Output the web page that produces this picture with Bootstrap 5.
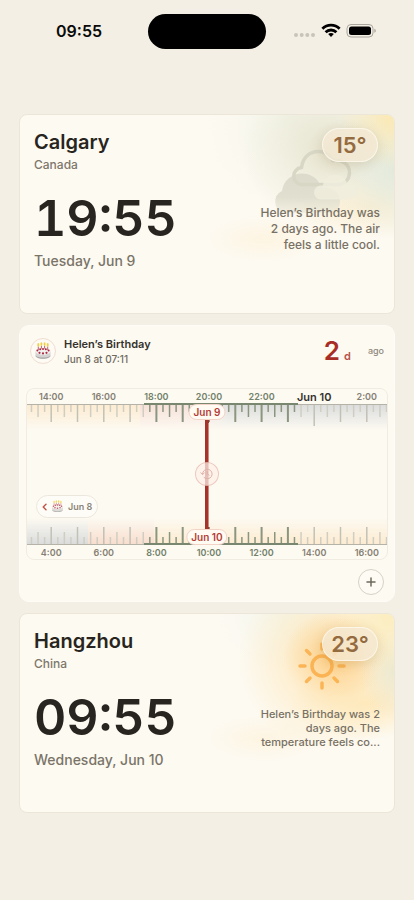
<!DOCTYPE html>
<html lang="en">
<head>
<meta charset="utf-8">
<meta name="viewport" content="width=device-width, initial-scale=1">
<title>World clock</title>
<link href="https://cdn.jsdelivr.net/npm/bootstrap@5.3.0/dist/css/bootstrap.min.css" rel="stylesheet">
<style>
body{background:#f4efe4;font-family:Inter,"Liberation Sans",sans-serif;color:#282520;min-height:100vh}
.status-bar{height:62px;color:#0a0a0a}
.status-time{font-size:16px;font-weight:600;line-height:20px;margin-left:10px}
.status-icons{margin-right:12px}
.island{width:118px;height:35px;background:#000}
.stack{padding:52px 19px 24px 19px;gap:11px}
.panel{background:#fdfaf2;border:1px solid #ebe6d8;border-radius:8px;overflow:hidden}
.city-panel{padding:13px 14px 0 14px;height:200px}
.timeline-panel{border-radius:10px;border-color:#fefcf7}
.city{font-size:20px;font-weight:600;line-height:28px}
.country{font-size:12px;font-weight:500;line-height:18px;color:#7d776b}
.clock{font-size:50px;font-weight:600;line-height:60px;margin-top:14px;font-variant-numeric:tabular-nums}
.date{font-size:14px;font-weight:500;line-height:26px;color:#7a7468}
.temp{width:56px;height:34px;margin-right:2px;font-size:22px;font-weight:600;color:#946b40;background:rgba(244,233,211,.8);border:1px solid rgba(255,252,243,.7);box-shadow:0 3px 12px rgba(120,100,50,.18)}
.note{width:132px;height:50px;margin-top:42px;font-weight:500;color:#787165}
.note-lg{font-size:12px;line-height:16px}
.note-sm{font-size:11px;line-height:14px}
.sky{top:0;right:0;width:190px;height:100%}
.sky-cloudy{background:
 radial-gradient(circle 54px at 190px 0,rgba(253,231,170,.9),rgba(253,231,170,.4) 50%,transparent),
 radial-gradient(ellipse 60px 70px at 190px 56px,rgba(223,232,218,.85),rgba(226,233,219,.4) 55%,transparent),
 radial-gradient(ellipse 80px 32px at 166px 92px,rgba(254,236,200,.7),rgba(254,236,200,.35) 50%,transparent),
 radial-gradient(ellipse 60px 24px at 60px 124px,rgba(254,240,212,.55),transparent),
 radial-gradient(ellipse 92px 78px at 130px 36px,rgba(226,222,198,.85),rgba(234,231,211,.5) 50%,transparent),
 radial-gradient(ellipse 96px 86px at 96px 12px,rgba(234,238,224,.7),rgba(240,242,230,.35) 55%,transparent)}
.sky-sunny{background:
 radial-gradient(circle 60px at 188px 0,rgba(252,236,184,.9),rgba(252,236,184,.4) 50%,transparent),
 radial-gradient(ellipse 34px 50px at 190px 56px,rgba(232,231,206,.85),rgba(234,231,206,.4) 50%,transparent),
 radial-gradient(ellipse 56px 44px at 135px 40px,rgba(255,190,94,.5),rgba(255,190,94,.2) 50%,transparent),
 radial-gradient(circle 92px at 126px 46px,rgba(255,208,132,.7),rgba(254,226,170,.4) 52%,transparent),
 radial-gradient(ellipse 80px 36px at 164px 90px,rgba(255,230,176,.7),rgba(255,230,176,.35) 50%,transparent),
 radial-gradient(ellipse 60px 24px at 60px 124px,rgba(254,240,212,.55),transparent),
 radial-gradient(ellipse 70px 60px at 80px 0,rgba(236,242,232,.5),transparent)}
.event-head{height:50px;padding:0 10px;margin-bottom:12px}
.event-icon{width:26px;height:26px;border:1px solid #f1ddd3;background:#fefbf4}
.event-title{font-size:11px;font-weight:600;line-height:15px;color:#35322d}
.event-date{font-size:10px;font-weight:500;line-height:14px;color:#6f6a5f}
.count{font-size:26px;font-weight:600;line-height:30px;color:#a82d27}
.count-unit{font-size:11px;font-weight:600;color:#b9534a}
.ago{font-size:9px;font-weight:500;color:#8f897c;margin-left:17px}
.ruler-frame{height:172px;margin:0 6px;border:1px solid #f0ece1;border-radius:8px;overflow:hidden}
.ruler text{font:600 9px Inter,"Liberation Sans",sans-serif;text-anchor:middle;fill:#858073}
.ruler .in-range{fill:#72816a}
.ruler .day{font-size:11px;fill:#35322d}
.pin{left:50%;transform:translateX(-50%);height:16px;padding:0 4px;font-size:10px;font-weight:600;line-height:14px;color:#b23c35;background:#fffaf2;border:1px solid #f3d3c8;white-space:nowrap}
.pin-top{top:15px}
.pin-bottom{bottom:14px}
.now-btn{left:50%;top:50%;transform:translate(-50%,-50%);width:24px;height:24px;border:1px solid rgba(205,120,108,.35);background:rgba(252,240,232,.75)}
.chip{left:9px;bottom:41px;height:23px;padding:0 5px;gap:4px;font-size:9px;font-weight:600;color:#8b8578;background:#fefcf6;border:1px solid #ece7dc}
.event-foot{height:41px;padding:2px 10px 0 0}
.add-btn{width:26px;height:26px;border:1px solid #d5d1c6;background:#fdfbf4}
</style>
</head>
<body>
<svg width="0" height="0" class="position-absolute" aria-hidden="true">
  <symbol id="cake" viewBox="0 0 18 18">
    <path d="M1.500 9.500v4.200c0 1.700 3.300 3 7.500 3s7.500-1.300 7.500-3V9.500z" fill="#d4d3d1"/>
    <path d="M1.500 13.500c0 1.900 3.300 3.200 7.500 3.200s7.500-1.300 7.500-3.200c-1.500 1.400-4 2-7.500 2s-6-.6-7.500-2z" fill="#a9a8a6"/>
    <ellipse cx="9" cy="9.300" rx="7.500" ry="3.600" fill="#f3f1ef"/>
    <g stroke="#c4606b" stroke-width="1"><path d="M4.300 4.500v3.500M7.400 3.700v3M10.600 3.700v3M13.700 4.500v3.500"/></g>
    <g fill="#f1cf45"><ellipse cx="4.300" cy="2.900" rx="1" ry="1.800"/><ellipse cx="7.400" cy="2.100" rx="1" ry="1.800"/><ellipse cx="10.600" cy="2.100" rx="1" ry="1.800"/><ellipse cx="13.700" cy="2.900" rx="1" ry="1.800"/></g>
    <g fill="#ab2941"><circle cx="3.400" cy="8.600" r="1"/><circle cx="6.200" cy="7.300" r="1"/><circle cx="9" cy="7" r="1"/><circle cx="11.800" cy="7.300" r="1"/><circle cx="14.600" cy="8.600" r="1"/><circle cx="5.500" cy="10.800" r="1.100"/><circle cx="9" cy="11.400" r="1.100"/><circle cx="12.500" cy="10.800" r="1.100"/></g>
  </symbol>
</svg>

<header class="status-bar row g-0 align-items-center">
  <div class="col text-center"><span class="status-time">09:55</span></div>
  <div class="col-auto"><div class="island rounded-pill"></div></div>
  <div class="col d-flex justify-content-center align-items-center">
    <svg class="status-icons" width="84" height="18" viewBox="0 0 84 18" aria-label="Wi-Fi on, battery full" role="img">
      <g fill="#c8c4ba"><circle cx="4" cy="13" r="2"/><circle cx="9.700" cy="13" r="2"/><circle cx="15.300" cy="13" r="2"/><circle cx="21" cy="13" r="2"/></g>
      <g fill="none" stroke="#000" stroke-width="2.800"><path d="M30.400 6.800a12 12 0 0 1 17.200 0"/><path d="M33.600 10.300a7.500 7.500 0 0 1 10.800 0"/></g>
      <path d="M39 15l-2.800-2.900a3.900 3.900 0 0 1 5.600 0z" fill="#000"/>
      <rect x="55" y="2.500" width="26" height="12.500" rx="4" fill="none" stroke="#aaa69d"/>
      <rect x="57" y="4.500" width="22" height="8.500" rx="2.500" fill="#000"/>
      <path d="M82.500 6.800c1.500.5 1.500 3.500 0 4z" fill="#8f8c85"/>
    </svg>
  </div>
</header>

<main class="stack d-flex flex-column">
  <section class="panel city-panel position-relative d-flex justify-content-between">
    <div class="sky sky-cloudy position-absolute" aria-hidden="true">
      <svg width="190" height="130" viewBox="0 0 190 130">
        <defs><linearGradient id="fade" x1="0" y1="0" x2="0" y2="1"><stop offset="0" stop-color="#dcdbcb"/><stop offset=".6" stop-color="#e1dfd0"/><stop offset="1" stop-color="#e9e6d4" stop-opacity=".5"/></linearGradient></defs>
        <path d="M79 98a12 12 0 0 1-1-22C79 66 88 58.500 98 58.500c8 0 15 4 18 11 1 1 2 2 3 3 9-1 17 5 17 13 0 6-2 10-6 12.500z" fill="url(#fade)"/>
        <path d="M99 69.500a8.500 8.500 0 0 1-1.500-17C99 42 106 36.500 114 36.500c7 0 12 3.500 15 9 9-1.500 16.500 4 16.500 12 0 7-5 12-12 12z" fill="none" stroke="#d8d7c6" stroke-width="3.500"/>
        <path d="M117 84.500a7 7 0 0 1 0-14h2c1-7 6-11 12-11s11 4 12 9c6-1 10 3 10 8s-4 8-9 8z" fill="#f0eddd" opacity=".85"/>
      </svg>
    </div>
    <div class="position-relative">
      <h2 class="city mb-0">Calgary</h2>
      <div class="country">Canada</div>
      <div class="clock">19:55</div>
      <div class="date">Tuesday, Jun 9</div>
    </div>
    <div class="position-relative d-flex flex-column align-items-end">
      <div class="temp rounded-pill d-flex align-items-center justify-content-center">15°</div>
      <div class="note note-lg d-flex align-items-center justify-content-end text-end"><span>Helen’s Birthday was<br>2 days ago. The air<br>feels a little cool.</span></div>
    </div>
  </section>

  <section class="panel timeline-panel">
    <div class="event-head d-flex align-items-center">
      <span class="event-icon rounded-circle d-flex align-items-center justify-content-center flex-shrink-0"><svg width="18" height="18" aria-hidden="true"><use href="#cake"/></svg></span>
      <div class="flex-grow-1 ps-2 me-2">
        <div class="event-title">Helen’s Birthday</div>
        <div class="event-date">Jun 8 at 07:11</div>
      </div>
      <div class="d-flex align-items-baseline gap-1"><span class="count">2</span><span class="count-unit">d</span></div>
      <span class="ago">ago</span>
    </div>
    <div class="ruler-frame position-relative">
      <svg class="ruler d-block" width="100%" height="170" role="img" aria-label="Calgary and Hangzhou hours side by side">
        <defs>
          <linearGradient id="down" x1="0" y1="0" x2="0" y2="1"><stop offset="0" stop-color="#fff"/><stop offset="1" stop-color="#000"/></linearGradient>
          <linearGradient id="up" x1="0" y1="1" x2="0" y2="0"><stop offset="0" stop-color="#fff"/><stop offset="1" stop-color="#000"/></linearGradient>
          <linearGradient id="dusk"><stop offset="0" stop-color="#f7dfd6"/><stop offset=".7" stop-color="#f5e2dc"/><stop offset="1" stop-color="#dfdfdf"/></linearGradient>
          <mask id="maskDown" maskUnits="userSpaceOnUse" x="-600" y="15" width="1200" height="26"><rect x="-600" y="15" width="1200" height="26" fill="url(#down)"/></mask>
          <mask id="maskUp" maskUnits="userSpaceOnUse" x="-600" y="129" width="1200" height="26"><rect x="-600" y="129" width="1200" height="26" fill="url(#up)"/></mask>
        </defs>
        <svg x="50%" overflow="visible">
          <g mask="url(#maskDown)">
            <rect x="-600" y="15" width="533" height="26" fill="#fcebd0"/>
            <rect x="-67" y="15" width="87" height="26" fill="url(#dusk)"/>
            <rect x="20" y="15" width="580" height="26" fill="#dadcdc"/>
          </g>
          <g mask="url(#maskUp)">
            <rect x="-600" y="129" width="481" height="26" fill="#dadcdc"/>
            <rect x="-119" y="129" width="66" height="26" fill="#f8ddcd"/>
            <rect x="-53" y="129" width="653" height="26" fill="#fcebd0"/>
          </g>
          <g id="ticks"></g>
          <path d="M-600 15.500H600M-600 155.500H600" stroke="#b5b3a8"/>
          <path d="M-63 15H91M-63 155H91" stroke="#798770" stroke-width="2"/>
          <g id="labels"></g>
          <rect x="-2" y="28" width="3" height="116" fill="#a5322b"/>
          <path d="M1.500 30v112" stroke="#cf8a80"/>
          <path d="M1 28v6M1 138v6" stroke="#a5322b" stroke-width="2"/>
        </svg>
      </svg>
      <span class="pin pin-top position-absolute rounded-pill">Jun 9</span>
      <span class="pin pin-bottom position-absolute rounded-pill">Jun 10</span>
      <button type="button" class="now-btn position-absolute rounded-circle p-0 d-flex align-items-center justify-content-center" aria-label="Back to now">
        <svg width="14" height="14" viewBox="0 0 14 14" fill="none" stroke="#dfb0a7" stroke-linecap="round" stroke-linejoin="round"><path d="M2.500 7a4.800 4.800 0 1 1 1.500 3.500M.8 5.800L2.500 7.600l1.800-1.600M7.300 4.500V7l1.800 1.200"/></svg>
      </button>
      <button type="button" class="chip position-absolute rounded-pill d-flex align-items-center">
        <svg width="5" height="8" viewBox="0 0 5 8" fill="none" stroke="#c0564d" stroke-width="1.400" stroke-linecap="round" stroke-linejoin="round" aria-hidden="true"><path d="M4 1.200L1.200 4 4 6.800"/></svg>
        <svg width="13" height="13" opacity=".8" aria-hidden="true"><use href="#cake"/></svg>
        <span>Jun 8</span>
      </button>
    </div>
    <div class="event-foot d-flex justify-content-end align-items-center">
      <button type="button" class="add-btn rounded-circle p-0 d-flex align-items-center justify-content-center" aria-label="Add event">
        <svg width="10" height="10" viewBox="0 0 10 10" stroke="#6d6a5c" stroke-width="1.500" stroke-linecap="round"><path d="M5 1v8M1 5h8"/></svg>
      </button>
    </div>
  </section>

  <section class="panel city-panel position-relative d-flex justify-content-between">
    <div class="sky sky-sunny position-absolute" aria-hidden="true">
      <svg width="190" height="130" viewBox="0 0 190 130">
        <g transform="translate(118 52)" fill="none" stroke="#fbb04c" stroke-width="3.500" stroke-linecap="round" opacity=".9">
          <circle r="10"/>
          <path d="M0-22v5M0 17v5M-22 0h5M17 0h5M-15.500-15.500l3.500 3.500M12 12l3.500 3.500M-15.500 15.500l3.500-3.500M12-12l3.500-3.500"/>
        </g>
      </svg>
    </div>
    <div class="position-relative">
      <h2 class="city mb-0">Hangzhou</h2>
      <div class="country">China</div>
      <div class="clock">09:55</div>
      <div class="date">Wednesday, Jun 10</div>
    </div>
    <div class="position-relative d-flex flex-column align-items-end">
      <div class="temp rounded-pill d-flex align-items-center justify-content-center">23°</div>
      <div class="note note-sm d-flex align-items-center justify-content-end text-end"><span>Helen’s Birthday was 2<br>days ago. The<br>temperature feels co...</span></div>
    </div>
  </section>
</main>
<script src="https://cdn.jsdelivr.net/npm/bootstrap@5.3.0/dist/js/bootstrap.bundle.min.js"></script>
<script>
const NS = 'http://www.w3.org/2000/svg', HOUR = 26.3, BASE = 2;
const ticks = document.getElementById('ticks'), labels = document.getElementById('labels');
function add(parent, tag, attrs, text) {
  const el = document.createElementNS(NS, tag);
  for (const k in attrs) el.setAttribute(k, attrs[k]);
  if (text) el.textContent = text;
  parent.appendChild(el);
}
function draw() {
  const half = document.querySelector('.ruler').clientWidth / 2;
  ticks.replaceChildren();
  labels.replaceChildren();
  for (let q = -88; q <= 88; q++) {
    const x = BASE + q * HOUR / 4, range = x > -60 && x < 92;
    if (Math.abs(x) > half) continue;
    const len = q % 4 === 0 ? 17 : q % 2 === 0 ? 12 : 7;
    const style = {
      stroke: range ? '#8a967f' : q % 4 === 0 ? '#c2c1b6' : '#d0cec3',
      'stroke-width': range && q % 4 === 0 ? 2 : 1.5
    };
    add(ticks, 'line', {x1: x, x2: x, y1: 16, y2: 16 + (q === 16 ? 21 : len), ...style});
    add(ticks, 'line', {x1: x, x2: x, y1: 155, y2: 155 - len, ...style});
  }
  for (let h = -22; h <= 22; h += 2) {
    const x = BASE + h * HOUR, cls = x > -60 && x < 92 ? 'in-range' : '';
    if (Math.abs(x) + 14 > half) continue;
    const top = (44 + h) % 24, bottom = (34 + h) % 24;
    add(labels, 'text', {x, y: top ? 11 : 12, class: top ? cls : 'day'}, top ? top + ':00' : 'Jun 10');
    add(labels, 'text', {x, y: 167, class: cls}, bottom + ':00');
  }
}
draw();
addEventListener('resize', draw);
</script>
</body>
</html>
